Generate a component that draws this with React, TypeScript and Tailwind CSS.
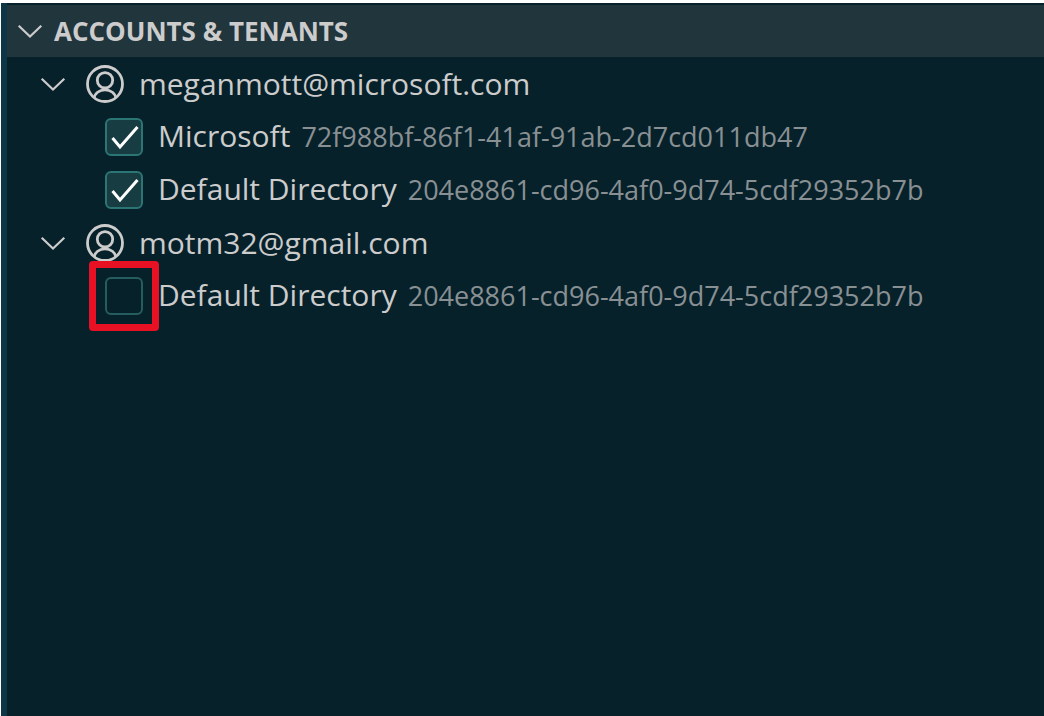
import { useState } from "react";

type Tenant = { id: string; name: string; tenantId: string; checked: boolean; highlighted?: boolean };
type Account = { email: string; tenants: Tenant[] };

const accounts: Account[] = [
  {
    email: "meganmott@microsoft.com",
    tenants: [
      { id: "megan-ms", name: "Microsoft", tenantId: "72f988bf-86f1-41af-91ab-2d7cd011db47", checked: true },
      { id: "megan-default", name: "Default Directory", tenantId: "204e8861-cd96-4af0-9d74-5cdf29352b7b", checked: true },
    ],
  },
  {
    email: "motm32@gmail.com",
    tenants: [
      {
        id: "motm-default",
        name: "Default Directory",
        tenantId: "204e8861-cd96-4af0-9d74-5cdf29352b7b",
        checked: false,
        highlighted: true,
      },
    ],
  },
];

function Chevron({ open }: { open: boolean }) {
  return (
    <svg
      viewBox="0 0 26 26"
      className={open ? "size-[26px] shrink-0" : "size-[26px] shrink-0 -rotate-90"}
      fill="none"
      stroke="currentColor"
      strokeWidth="2.2"
      aria-hidden="true"
    >
      <path d="M1.7 7.8 13 18.500 24.3 7.8" />
    </svg>
  );
}

function AccountIcon() {
  return (
    <svg
      viewBox="0 0 38 38"
      className="size-[38px] shrink-0"
      fill="none"
      stroke="currentColor"
      strokeWidth="2.8"
      aria-hidden="true"
    >
      <circle cx="19" cy="19" r="17.500" />
      <circle cx="19" cy="15.3" r="7.7" />
      <path d="M8.2 33.2C8.6 28.500 13.2 24.8 19 24.8s10.400 3.700 10.800 8.400" />
    </svg>
  );
}

function TenantRow({ tenant }: { tenant: Tenant }) {
  const [checked, setChecked] = useState(tenant.checked);
  return (
    <li className="flex h-[53px] items-center pl-[98px]">
      <span className="relative grid size-[38px] shrink-0 place-items-center">
        <input
          id={tenant.id}
          type="checkbox"
          checked={checked}
          onChange={() => setChecked(!checked)}
          className="size-[38px] appearance-none rounded-md border-2 border-[#265e5f] checked:border-[#2b7574] checked:bg-[#173c42]"
        />
        {checked && (
          <svg
            viewBox="0 0 38 38"
            className="pointer-events-none absolute inset-0 size-[38px]"
            fill="none"
            stroke="#ffffff"
            strokeWidth="3"
            aria-hidden="true"
          >
            <path d="M7.500 20 15 29 32.500 9" />
          </svg>
        )}
        {tenant.highlighted && (
          <span className="pointer-events-none absolute -inset-4 rounded-sm border-[7px] border-[#e81123]" />
        )}
      </span>
      <label htmlFor={tenant.id} className="flex items-baseline gap-[11px] pl-[15px] whitespace-nowrap">
        <span>{tenant.name}</span>
        <span className="text-[27px] text-[#899093]">{tenant.tenantId}</span>
      </label>
    </li>
  );
}

function AccountGroup({ account }: { account: Account }) {
  const [open, setOpen] = useState(true);
  return (
    <li>
      <button
        type="button"
        aria-expanded={open}
        onClick={() => setOpen(!open)}
        className="flex h-[53px] w-full items-center pl-[33px] text-left whitespace-nowrap"
      >
        <Chevron open={open} />
        <span className="flex items-center gap-[15px] pl-5">
          <AccountIcon />
          {account.email}
        </span>
      </button>
      {open && (
        <ul>
          {account.tenants.map((t) => (
            <TenantRow key={t.id} tenant={t} />
          ))}
        </ul>
      )}
    </li>
  );
}

export default function App() {
  const [open, setOpen] = useState(true);
  return (
    <div className="flex min-h-screen bg-white pt-[3px] pl-px font-['Open_Sans','Noto_Sans',sans-serif] text-[30px] leading-9 text-[#cccccc]">
      <section className="min-w-0 flex-1 border-l-[6px] border-[#0d3646] bg-[#07212a]">
        <h2>
          <button
            type="button"
            aria-expanded={open}
            onClick={() => setOpen(!open)}
            className="flex h-[54px] w-full items-center gap-[11px] border-t-2 border-[#07212a] bg-[#21353d] pl-[10px] text-left text-[26px] font-bold whitespace-nowrap"
          >
            <Chevron open={open} />
            ACCOUNTS &amp; TENANTS
          </button>
        </h2>
        {open && (
          <ul>
            {accounts.map((a) => (
              <AccountGroup key={a.email} account={a} />
            ))}
          </ul>
        )}
      </section>
    </div>
  );
}
